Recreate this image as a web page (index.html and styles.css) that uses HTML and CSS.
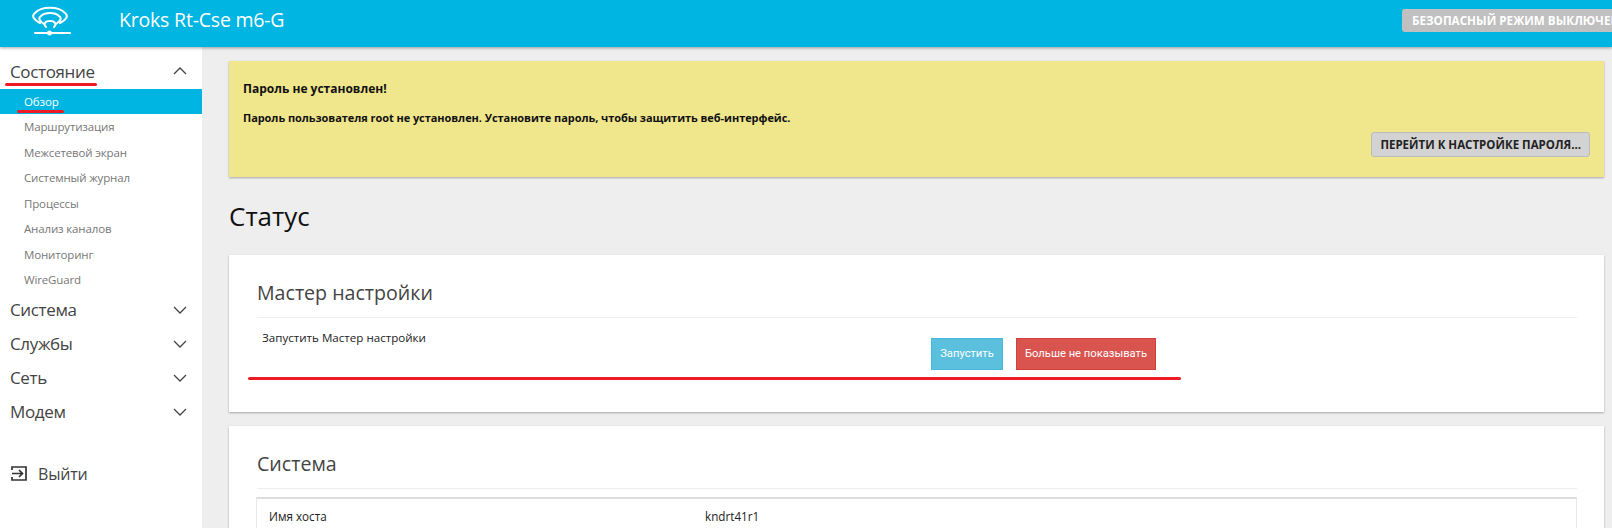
FILE: index.html
```html
<!DOCTYPE html>
<html lang="ru">
<head>
<meta charset="utf-8">
<title>Kroks Rt-Cse m6-G</title>
<link rel="stylesheet" href="styles.css">
</head>
<body>
<header class="topbar">
  <div class="brand">
    <svg class="logo" width="40" height="34" viewBox="31 0 40 34" fill="none" stroke="#fff" stroke-width="2" stroke-linecap="round">
      <path d="M40 21C34 18 31 14 35 11C41 4 59 4 65 11C69 14 66 18 60 21"/>
      <path d="M44 22C39 19 38 16 41 14C45 10 55 10 59 14C62 16 61 19 56 22"/>
      <path d="M46 25C43 22 45 19 50 19C55 19 57 22 54 25"/>
      <path d="M35 31H70"/>
      <circle cx="49.500" cy="31" r="2.500" fill="#fff" stroke="none"/>
    </svg>
    <span class="product">Kroks Rt-Cse m6-G</span>
  </div>
  <span class="safe-mode">БЕЗОПАСНЫЙ РЕЖИМ ВЫКЛЮЧЕН</span>
</header>
<div class="shell">
  <nav class="sidebar">
    <div class="group group-first">
      <span>Состояние</span>
      <svg class="chevron" width="14" height="8" viewBox="0 0 14 8"><path d="M1 7L7 1L13 7"/></svg>
    </div>
    <ul class="submenu">
      <li class="active">Обзор</li>
      <li>Маршрутизация</li>
      <li>Межсетевой экран</li>
      <li>Системный журнал</li>
      <li>Процессы</li>
      <li>Анализ каналов</li>
      <li>Мониторинг</li>
      <li>WireGuard</li>
    </ul>
    <div class="group"><span>Система</span><svg class="chevron" width="14" height="8" viewBox="0 0 14 8"><path d="M1 1L7 7L13 1"/></svg></div>
    <div class="group"><span>Службы</span><svg class="chevron" width="14" height="8" viewBox="0 0 14 8"><path d="M1 1L7 7L13 1"/></svg></div>
    <div class="group"><span>Сеть</span><svg class="chevron" width="14" height="8" viewBox="0 0 14 8"><path d="M1 1L7 7L13 1"/></svg></div>
    <div class="group"><span>Модем</span><svg class="chevron" width="14" height="8" viewBox="0 0 14 8"><path d="M1 1L7 7L13 1"/></svg></div>
    <div class="logout">
      <svg width="16" height="15" viewBox="0 0 16 15" fill="none" stroke="#333" stroke-width="1.700">
        <path d="M1 4V1H15V14H1V11"/>
        <path d="M1 7.500H11M8 4L11.500 7.500L8 11"/>
      </svg>
      <span>Выйти</span>
    </div>
  </nav>
  <main class="content">
    <section class="alert">
      <h4>Пароль не установлен!</h4>
      <p>Пароль пользователя root не установлен. Установите пароль, чтобы защитить веб-интерфейс.</p>
      <div class="alert-actions"><button class="btn-gray" type="button">ПЕРЕЙТИ К НАСТРОЙКЕ ПАРОЛЯ...</button></div>
    </section>
    <h2 class="page-title">Статус</h2>
    <section class="card card-wizard">
      <h3>Мастер настройки</h3>
      <div class="wizard">
        <span class="wizard-text">Запустить Мастер настройки</span>
        <div class="wizard-actions">
          <button class="btn btn-info" type="button">Запустить</button>
          <button class="btn btn-danger" type="button">Больше не показывать</button>
        </div>
      </div>
    </section>
    <section class="card">
      <h3>Система</h3>
      <div class="table">
        <div class="table-row"><span class="table-key">Имя хоста</span><span>kndrt41r1</span></div>
      </div>
    </section>
  </main>
</div>
<i class="mark mark-state"></i>
<i class="mark mark-overview"></i>
<i class="mark mark-wizard"></i>
</body>
</html>
```

FILE: styles.css
```css
* { box-sizing: border-box; }
html, body { margin: 0; height: 528px; overflow: hidden; }
body { font-family: "Open Sans", "Noto Sans", sans-serif; background: #eee; color: #111; position: relative; }

.topbar { height: 47px; background: #00b5e2; display: flex; align-items: flex-start; overflow: hidden; box-shadow: 0 1px 3px rgba(0,0,0,.35); position: relative; z-index: 2; }
.brand { flex: 0 0 1402px; display: flex; align-items: flex-start; padding-left: 31px; }
.logo { margin-top: 2px; }
.product { margin-left: 48px; color: #fff; font-size: 19.500px; line-height: 40px; letter-spacing: -.2px; }
.safe-mode { flex: none; margin-top: 9px; height: 23px; padding: 0 10px; background: #c0c0c0; border-radius: 3px; color: #fff; font-size: 11.700px; font-weight: 700; line-height: 23px; white-space: nowrap; }

.shell { display: flex; height: 481px; }
.sidebar { flex: 0 0 202px; background: #fff; padding-top: 7px; }
.group { height: 34px; padding: 0 15px 0 10px; display: flex; align-items: center; justify-content: space-between; font-size: 17px; letter-spacing: -.35px; color: #444; }
.group-first { height: 34.500px; }
.chevron { fill: none; stroke: #444; stroke-width: 1.300; }
.submenu { list-style: none; margin: 0; padding: 0; }
.submenu li { height: 25.500px; padding-left: 24px; font-size: 11.500px; letter-spacing: -.15px; line-height: 26px; color: #777; }
.submenu li.active { background: #00b5e2; color: #fff; }
.logout { margin-top: 28px; padding-left: 11px; display: flex; align-items: center; gap: 11px; font-size: 16px; letter-spacing: -.2px; line-height: 34px; color: #444; }

.content { flex: 1; min-width: 0; padding: 14px 8px 0 27px; }
.alert { height: 116px; background: #f0e68c; padding: 18px 14px 0 14px; box-shadow: 0 1px 2px rgba(0,0,0,.3); color: #111; font-weight: 700; }
.alert h4 { margin: 0; font-size: 12px; line-height: 20px; }
.alert p { margin: 9px 0 0; font-size: 11px; letter-spacing: -.06px; line-height: 20px; }
.alert-actions { display: flex; justify-content: flex-end; margin-top: 4px; }
.btn-gray { height: 25px; padding: 0 8px; background: #d3d3d3; border: 1px solid #bbb; border-radius: 3px; color: #222; font: 700 11.500px/23px "Open Sans", "Noto Sans", sans-serif; }
.page-title { margin: 19px 0 18px; font-size: 26px; line-height: 41px; font-weight: 400; color: #111; }

.card { background: #fff; padding: 22px 27px 0 28px; box-shadow: 0 1px 2px rgba(0,0,0,.3); margin-bottom: 14px; }
.card-wizard { height: 157px; }
.card h3 { margin: 0; height: 41px; font-size: 19.600px; line-height: 32px; font-weight: 400; color: #444; border-bottom: 1px solid #eee; }
.wizard { padding: 10px 5px 0; font-size: 11.600px; line-height: 20px; color: #222; display: flex; }
.wizard-text { flex: 0 0 669px; }
.wizard-actions { display: flex; gap: 13px; margin-top: 10px; }
.btn { height: 32px; border-radius: 0; padding: 0; font: 400 11.200px/30px "Roboto", "Open Sans", sans-serif; color: #fff; }
.btn-info { width: 72px; background: #5bc0de; border: 1px solid #46b8da; }
.btn-danger { width: 140px; background: #d9534f; border: 1px solid #d43f3a; }
.table { margin-top: 8px; margin-left: -1px; border: 1px solid #e8e8e8; border-top: 2px solid #ddd; padding: 0 12px; }
.table-row { display: flex; font-size: 11.700px; line-height: 35px; color: #222; }
.table-key { flex: 0 0 436px; }

.mark { position: absolute; display: block; height: 3px; background: #ed1c24; border-radius: 1.500px; z-index: 3; }
.mark-state { left: 5px; top: 83px; width: 92px; }
.mark-overview { left: 17px; top: 109.500px; width: 47px; }
.mark-wizard { left: 248px; top: 377px; width: 933px; }
```
